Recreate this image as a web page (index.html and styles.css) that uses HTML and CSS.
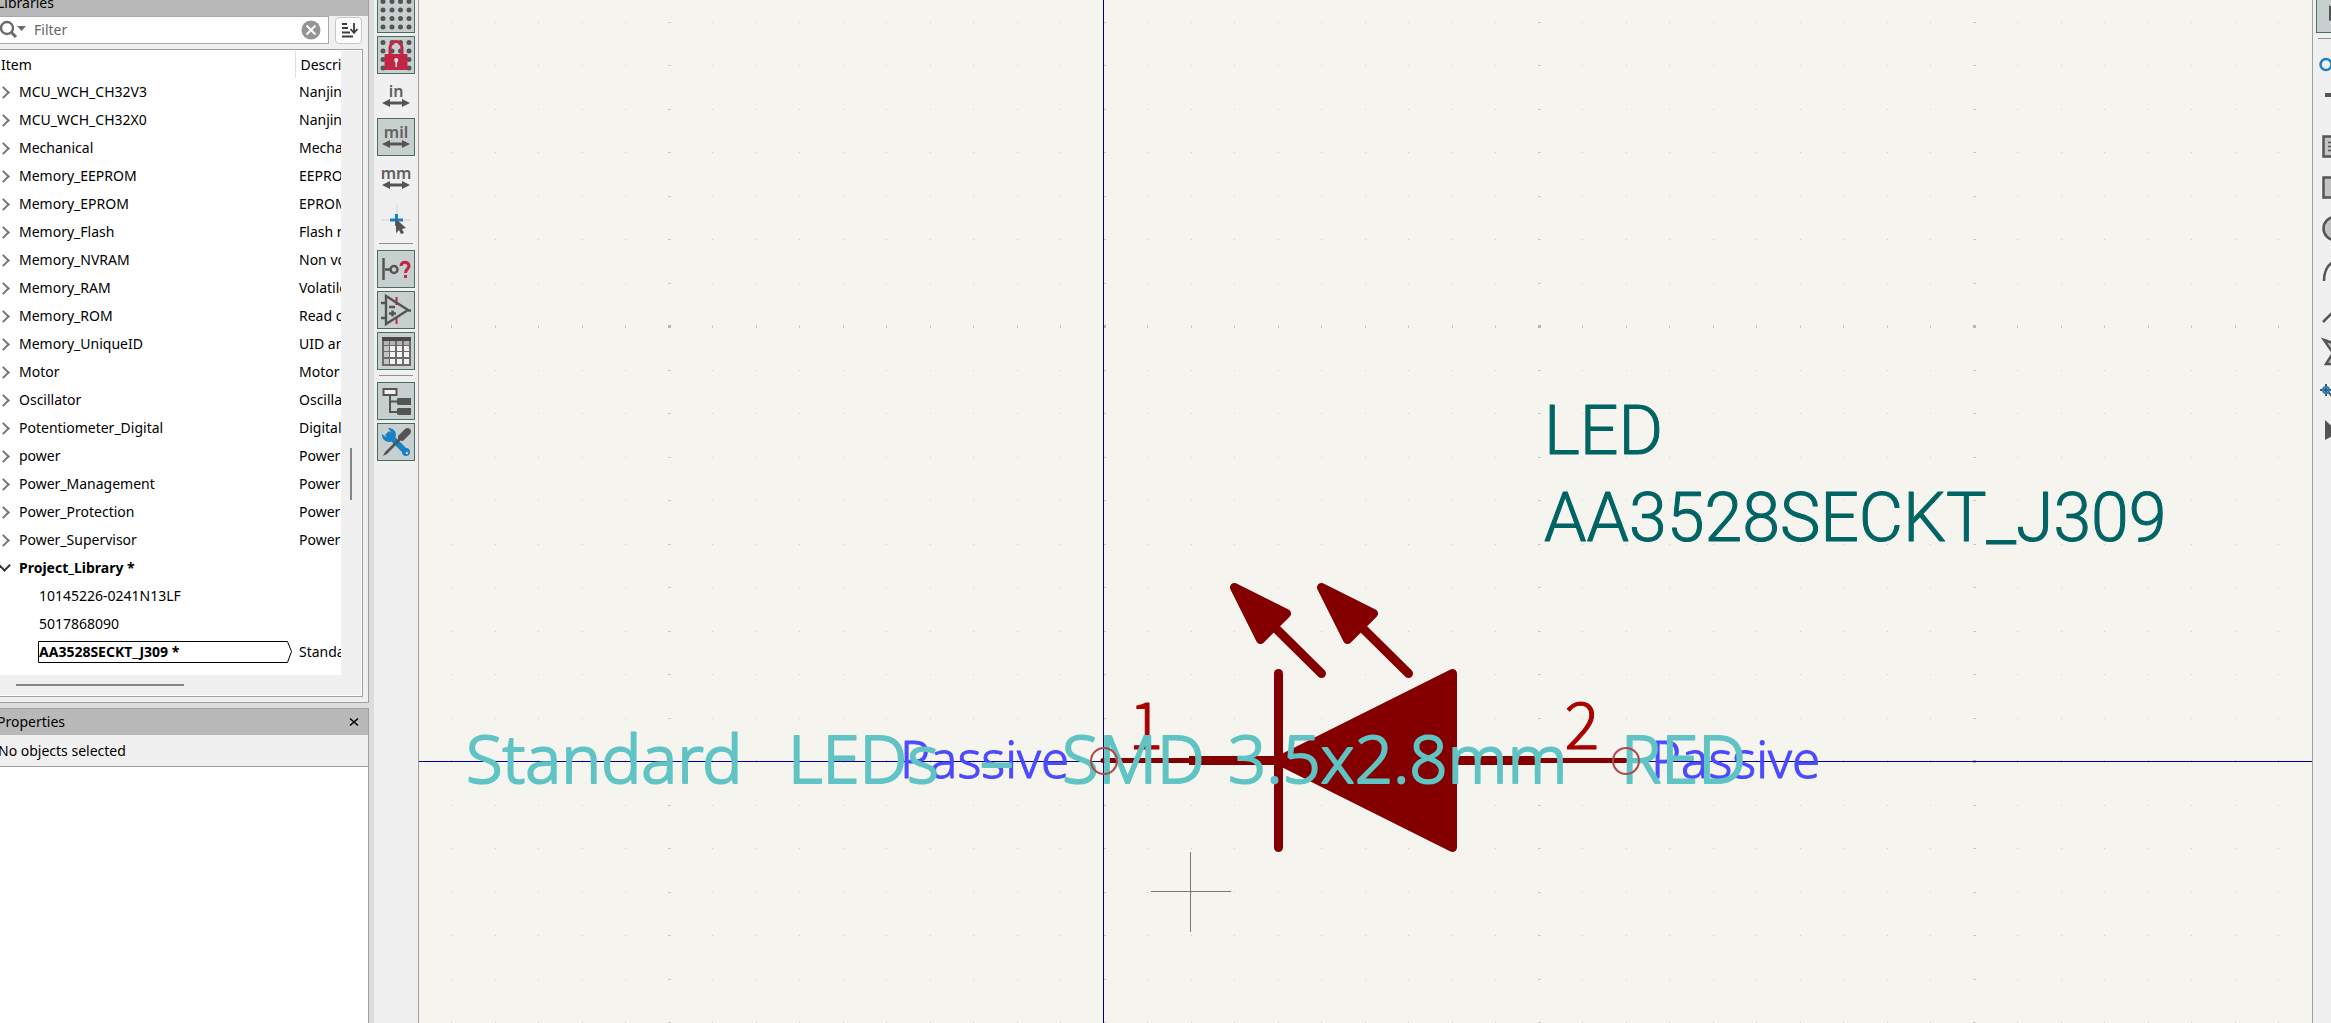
FILE: index.html
```html
<!DOCTYPE html>
<html lang="en">
<head>
<meta charset="utf-8">
<title>Symbol Editor</title>
<link rel="stylesheet" href="styles.css">
</head>
<body>
<aside class="sidebar">
  <section class="panel libraries">
    <h2 class="panel-title">Libraries</h2>
    <div class="search-row">
      <div class="search">
        <svg class="search-icon" width="28" height="20" viewBox="0 0 28 20" aria-hidden="true"><circle cx="7" cy="8" r="6" fill="none" stroke="#6a6a6a" stroke-width="2.400"/><path d="M11 12l5 5" stroke="#6a6a6a" stroke-width="3"/><path d="M17 6h9l-4.500 5z" fill="#6a6a6a"/></svg>
        <input class="search-input" type="text" placeholder="Filter" aria-label="Filter libraries">
        <button class="clear" type="button" aria-label="Clear filter"><svg width="20" height="20" viewBox="0 0 20 20"><circle cx="10" cy="10" r="9.500" fill="#949494"/><path d="M5.500 5.500l9 9M14.500 5.500l-9 9" stroke="#fff" stroke-width="2"/></svg></button>
      </div>
      <button class="sort" type="button" aria-label="Sort"><svg width="20" height="20" viewBox="0 0 20 20" fill="none" stroke="#3c3c3c" stroke-width="1.800"><path d="M3 4h5M3 8h6M3 12.500h8M3 16.500h11M15 3v9M11.500 9l3.500 4 3.500-4"/></svg></button>
    </div>
    <div class="tree">
      <div class="tree-body">
        <table class="tree-table">
          <thead><tr><th>Item</th><th>Description</th></tr></thead>
          <tbody>
            <tr><td class="lib">MCU_WCH_CH32V3</td><td>Nanjing</td></tr>
            <tr><td class="lib">MCU_WCH_CH32X0</td><td>Nanjing</td></tr>
            <tr><td class="lib">Mechanical</td><td>Mechanical</td></tr>
            <tr><td class="lib">Memory_EEPROM</td><td>EEPROM</td></tr>
            <tr><td class="lib">Memory_EPROM</td><td>EPROM</td></tr>
            <tr><td class="lib">Memory_Flash</td><td>Flash memory</td></tr>
            <tr><td class="lib">Memory_NVRAM</td><td>Non volatile</td></tr>
            <tr><td class="lib">Memory_RAM</td><td>Volatile</td></tr>
            <tr><td class="lib">Memory_ROM</td><td>Read only</td></tr>
            <tr><td class="lib">Memory_UniqueID</td><td>UID and</td></tr>
            <tr><td class="lib">Motor</td><td>Motor</td></tr>
            <tr><td class="lib">Oscillator</td><td>Oscillators</td></tr>
            <tr><td class="lib">Potentiometer_Digital</td><td>Digital</td></tr>
            <tr><td class="lib">power</td><td>Power</td></tr>
            <tr><td class="lib">Power_Management</td><td>Power</td></tr>
            <tr><td class="lib">Power_Protection</td><td>Power</td></tr>
            <tr><td class="lib">Power_Supervisor</td><td>Power</td></tr>
            <tr><td class="lib open">Project_Library *</td><td></td></tr>
            <tr><td class="part">10145226-0241N13LF</td><td></td></tr>
            <tr><td class="part">5017868090</td><td></td></tr>
            <tr><td class="part current"><svg class="tag" width="255" height="24" viewBox="0 0 255 24" aria-hidden="true"><path d="M.5 1.500h249l4 10-4 11H.5z" fill="none" stroke="#000"/></svg>AA3528SECKT_J309 *</td><td>Standard</td></tr>
          </tbody>
        </table>
        <div class="vscroll"><div class="vthumb"></div></div>
      </div>
      <div class="hscroll"><div class="hthumb"></div></div>
    </div>
  </section>
  <section class="panel properties">
    <h2 class="panel-title">Properties<button class="close" type="button" aria-label="Close"><svg width="10" height="10" viewBox="0 0 10 10"><path d="M1 1.500l8 7M9 1.500l-8 7" stroke="#000" stroke-width="1.500"/></svg></button></h2>
    <p class="status">No objects selected</p>
    <div class="property-grid"></div>
  </section>
</aside>

<nav class="toolbar" aria-label="View">
  <button class="tool on" type="button" aria-label="Grid"><svg viewBox="0 0 38 38"><path class="dots" d="M6 6.500h0M15 6.500h0M23.500 6.500h0M32 6.500h0M6 15h0M15 15h0M23.500 15h0M32 15h0M6 23.500h0M15 23.500h0M23.500 23.500h0M32 23.500h0M6 32h0M15 32h0M23.500 32h0M32 32h0"/></svg></button>
  <button class="tool on" type="button" aria-label="Grid overrides"><svg viewBox="0 0 38 38"><path class="dots" d="M6 6.500h0M15 6.500h0M23.500 6.500h0M32 6.500h0M6 15h0M15 15h0M23.500 15h0M32 15h0M6 23.500h0M32 23.500h0M6 32h0M32 32h0"/><path d="M13 19v-7a6 6.500 0 0 1 12 0v7" fill="none" stroke="#c22443" stroke-width="3"/><rect x="7.500" y="18" width="23" height="16" rx="1" fill="#c22443"/><path d="M17.500 25a2 2 0 1 1 3.500 0l-1 2v4h-1.500v-4z" fill="#e8e8e8"/></svg></button>
  <button class="tool" type="button"><svg viewBox="0 0 38 38"><text class="unit" x="19" y="20">in</text><path class="arrow" d="M5 26l8-4v2.500h12V22l8 4-8 4v-2.500H13V30z"/></svg></button>
  <button class="tool on" type="button"><svg viewBox="0 0 38 38"><text class="unit" x="19" y="20">mil</text><path class="arrow" d="M5 26l8-4v2.500h12V22l8 4-8 4v-2.500H13V30z"/></svg></button>
  <button class="tool" type="button"><svg viewBox="0 0 38 38"><text class="unit" x="19" y="20">mm</text><path class="arrow" d="M5 26l8-4v2.500h12V22l8 4-8 4v-2.500H13V30z"/></svg></button>
  <button class="tool" type="button" aria-label="Crosshair"><svg viewBox="0 0 38 38"><path d="M4 20h30M20 4v30" stroke="#d4d4d4"/><path d="M13 20h13M19.500 14v12" stroke="#1a81c4" stroke-width="3"/><path d="M19 19l10 9-4 1 2 4-3 1-2-4-3 3z" fill="#545454"/></svg></button>
  <hr class="divider">
  <button class="tool on" type="button" aria-label="Pin electrical type"><svg viewBox="0 0 38 38"><path d="M6.500 8v22M8 19.500h5" stroke="#545454" stroke-width="2.500"/><circle cx="17" cy="19.500" r="3.500" fill="none" stroke="#545454" stroke-width="2.500"/><path d="M24 16c0-5 8-5 8 0 0 3-3.500 3-3.500 7M28.500 25v3" fill="none" stroke="#c22443" stroke-width="3"/></svg></button>
  <button class="tool on" type="button" aria-label="Hidden pins"><svg viewBox="0 0 38 38"><path d="M19.500 6v8M19.500 26v7" stroke="#c22443" stroke-width="2"/><path d="M9 5v28l22-14zM4 12h5M4 27h5M31 19.500h3M12 16h6M12 22.500h7M15.500 19.500v6" fill="none" stroke="#545454" stroke-width="2.400"/></svg></button>
  <button class="tool on" type="button" aria-label="Pin table"><svg viewBox="0 0 38 38"><path d="M5 5h29v29H5z" fill="#6a6a6a"/><path d="M5 5h29v4H5z" fill="#484848"/><path d="M7 9h5v4H7zM13 9h5v4h-5zM20 9h5v4h-5zM27 9h5v4h-5z" fill="#b4b4b4"/><path d="M7 14h5v5H7zM7 20h5v5H7zM7 27h5v5H7z" fill="#c4c4c4"/><path d="M13 14h5v5h-5zM20 14h5v5h-5zM27 14h5v5h-5zM13 20h5v5h-5zM20 20h5v5h-5zM27 20h5v5h-5zM13 27h5v5h-5zM20 27h5v5h-5zM27 27h5v5h-5z" fill="#f2f2f2"/></svg></button>
  <hr class="divider">
  <button class="tool on" type="button" aria-label="Library tree"><svg viewBox="0 0 38 38"><path d="M13 14v16h8M13 19.500h8" fill="none" stroke="#545454" stroke-width="2"/><rect x="6.500" y="7" width="13" height="6" fill="#f2f2f2" stroke="#545454" stroke-width="2"/><path d="M20 17l1-1h13v7H21l-1-1zM20 27l1-1h13v7H21l-1-1z" fill="#545454"/></svg></button>
  <button class="tool on" type="button" aria-label="Properties"><svg viewBox="0 0 38 38"><path d="M10 10l19 19" stroke="#1a81c4" stroke-width="6"/><circle cx="29" cy="29" r="4" fill="#1a81c4"/><circle cx="30" cy="30" r="1.200" fill="#c8d0cf"/><path d="M11 5a7 7 0 1 1-6 6l4 3 4-1 1-4z" fill="#1a81c4"/><path d="M6 33l2-4 14-14 2 2L10 31z" fill="#545454"/><path d="M21 13l7-7q3-2 5 0t0 5l-7 7-5-1z" fill="#545454"/></svg></button>
</nav>

<main class="canvas">
  <svg class="sheet" role="img" aria-label="LED symbol">
    <defs>
      <pattern id="minor" width="87" height="87" patternUnits="userSpaceOnUse"><path d="M1 0h1v1H1zM44 0h1v1h-1zM1 44h1v1H1zM44 44h1v1h-1z" fill="#d2d1cd"/></pattern>
      <pattern id="major" y="-1" width="435" height="435" patternUnits="userSpaceOnUse">
        <path d="M0 45h3v1H0zM0 88h3v1H0zM0 132h3v1H0zM0 175h3v1H0zM0 219h3v1H0zM0 262h3v1H0zM0 306h3v1H0zM0 349h3v1H0zM0 393h3v1H0zM44 0h1v3h-1zM88 0h1v3h-1zM131 0h1v3h-1zM175 0h1v3h-1zM218 0h1v3h-1zM262 0h1v3h-1zM305 0h1v3h-1zM349 0h1v3h-1zM392 0h1v3h-1z" fill="#c8c7c3"/>
        <path d="M0 0h3v3H0z" fill="#b5b5b1"/>
      </pattern>
    </defs>
    <g transform="translate(684 761)">
      <rect x="-4000" y="-4000" width="8000" height="8000" fill="url(#minor)"/>
      <rect x="-4000" y="-4000" width="8000" height="8000" fill="url(#major)"/>
      <path d="M-4000 .5h8000M.5-4000v8000" stroke="#000084"/>
      <g fill="none" stroke="#840000" stroke-linecap="round" stroke-linejoin="round">
        <path d="M0-.5h86M437-.5h85" stroke-width="5"/>
        <path d="M86-.5h90M349-.5h88" stroke-width="9" stroke-linecap="butt"/>
        <path d="M175.500-87.500v174" stroke-width="9"/>
        <path d="M175.500-.5l174-87v174zM131.500-173.500l52 26-26 26zM131.500-173.500l87 86M218.500-173.500l52 26-26 26zM218.500-173.500l87 86" fill="#840000" stroke-width="9"/>
      </g>
      <text class="lettering pin-number" x="43" y="-12">1</text>
      <text class="lettering pin-number" x="479" y="-12">2</text>
      <text class="lettering pin-type" x="-203" y="17">Passive</text>
      <text class="lettering pin-type" x="548" y="17">Passive</text>
      <text class="lettering value" x="441" y="-307">LED</text>
      <text class="lettering value" x="441" y="-220">AA3528SECKT_J309</text>
      <text class="lettering description" y="22"><tspan x="-637">Standard </tspan><tspan x="-315">LEDs </tspan><tspan x="-123">– </tspan><tspan x="-41">SMD </tspan><tspan x="125">3.5x2.8mm </tspan><tspan x="518">RED</tspan></text>
      <g fill="none" stroke="#b04a4a" stroke-width="2"><circle cx="1" r="13"/><circle cx="523" r="13"/></g>
      <path d="M48 130.500h80M87.500 91v80" stroke="#777773"/>
    </g>
  </svg>
</main>

<nav class="toolbar right" aria-label="Draw">
  <button class="tool on" type="button" aria-label="Select"><svg viewBox="0 0 38 38"><path d="M13 10l14 10-14 6z" fill="#545454"/></svg></button>
  <hr class="divider">
  <button class="tool" type="button" aria-label="Pin"><svg viewBox="0 0 38 38"><circle cx="10" cy="19.500" r="5.500" fill="none" stroke="#1a81c4" stroke-width="2.500"/><path d="M16 19.500h18" stroke="#1a81c4" stroke-width="2.500"/></svg></button>
  <button class="tool" type="button" aria-label="Text"><svg viewBox="0 0 38 38"><path d="M9 9h20M19 9v22" stroke="#545454" stroke-width="4"/></svg></button>
  <button class="tool" type="button" aria-label="Text box"><svg viewBox="0 0 38 38"><rect x="7.500" y="9.500" width="23" height="20" fill="#c4c4c4" stroke="#545454" stroke-width="2.500"/><path d="M12 15.500h14M12 19.500h14M12 23.500h14" stroke="#545454" stroke-width="1.500"/></svg></button>
  <button class="tool" type="button" aria-label="Rectangle"><svg viewBox="0 0 38 38"><rect x="7.500" y="9.500" width="23" height="20" fill="#c4c4c4" stroke="#545454" stroke-width="2.500"/></svg></button>
  <button class="tool" type="button" aria-label="Circle"><svg viewBox="0 0 38 38"><circle cx="19" cy="19.500" r="11.500" fill="#c4c4c4" stroke="#545454" stroke-width="2.500"/></svg></button>
  <button class="tool" type="button" aria-label="Arc"><svg viewBox="0 0 38 38"><path d="M8 31Q8 11 27 9" fill="none" stroke="#545454" stroke-width="2.500"/></svg></button>
  <button class="tool" type="button" aria-label="Line"><svg viewBox="0 0 38 38"><path d="M7 31L30 8" stroke="#545454" stroke-width="2.500"/></svg></button>
  <button class="tool" type="button" aria-label="Polygon"><svg viewBox="0 0 38 38"><path d="M8 8l23 8v16H10l7-11z" fill="#c4c4c4" stroke="#545454" stroke-width="2.500"/></svg></button>
  <button class="tool" type="button" aria-label="Anchor"><svg viewBox="0 0 38 38"><path d="M4 17h12M10 11v12M12 19l8 8" stroke="#545454" stroke-width="2"/><circle cx="10" cy="17" r="3" fill="none" stroke="#1a81c4" stroke-width="2"/></svg></button>
  <button class="tool" type="button" aria-label="Delete"><svg viewBox="0 0 38 38"><path d="M9 6l15 14-6 1-9 5z" fill="#545454"/></svg></button>
</nav>
</body>
</html>
```
FILE: styles.css
```css
* { box-sizing: border-box; }

body {
  margin: 0;
  display: flex;
  height: 100vh;
  overflow: hidden;
  background: #dcdcdc;
  color: #000;
  font: 14px/20px "Noto Sans", "Open Sans", sans-serif;
}

button { padding: 0; border: 0; background: none; color: inherit; font: inherit; }
svg { display: block; }

.sidebar {
  flex: none;
  width: 369px;
  display: flex;
  flex-direction: column;
  gap: 5px;
  margin-right: 5px;
}

.panel { background: #f0f0f0; border-right: 1px solid #a0a0a0; }
.libraries { border-bottom: 1px solid #a0a0a0; }

.panel-title {
  display: flex;
  justify-content: space-between;
  align-items: center;
  height: 26px;
  margin: 0;
  padding-right: 9px;
  background: #b9b9b9;
  font-size: 14px;
  font-weight: 400;
  text-indent: -3px;
}
.libraries .panel-title { margin-top: -10px; }

.search-row { display: flex; align-items: center; padding-right: 6px; gap: 6px; }
.search {
  flex: 1;
  display: flex;
  align-items: center;
  height: 28px;
  padding-right: 7px;
  background: #fff;
  border: 1px solid #a8a8a8;
  border-left: 0;
}
.search-input { flex: 1; min-width: 0; border: 0; outline: 0; padding: 0 6px; font: inherit; background: none; }
.search-input::placeholder { color: #666; opacity: 1; }
.sort {
  display: flex;
  align-items: center;
  justify-content: center;
  width: 27px;
  height: 27px;
  border: 1px solid #c8c8c8;
  border-radius: 4px;
  background: #fdfdfd;
}

.tree {
  margin: 5px 5px 5px 0;
  padding: 1px 1px 1px 0;
  border: 1px solid #a0a0a0;
  border-left: 0;
  background: #fff;
}
.tree-body { display: flex; }
.tree-table {
  flex: 1;
  min-width: 0;
  table-layout: fixed;
  width: 341px;
  margin-bottom: 9px;
  border-collapse: collapse;
  white-space: nowrap;
}
.tree-table th, .tree-table td { padding: 0; height: 28px; overflow: hidden; text-align: left; font-weight: 400; }
.tree-table th { height: 27px; padding-left: 5px; }
.tree-table th:first-child { width: 295px; padding-left: 1px; border-right: 1px solid #e0e0e0; }
.tree-table td:last-child { padding-left: 4px; }
.tree-table .lib { position: relative; padding-left: 19px; }
.tree-table .part { position: relative; padding-left: 39px; }
.tree-table .open, .tree-table .current { font-weight: 700; }
.lib::before {
  content: "";
  position: absolute;
  left: -1px;
  top: 10px;
  width: 7px;
  height: 7px;
  border: solid #777;
  border-width: 2px 2px 0 0;
  transform: rotate(45deg);
}
.lib.open::before { top: 7px; left: 0; border-color: #333; transform: rotate(135deg); }
.tag { position: absolute; left: 38px; top: 2px; }

.vscroll { flex: none; width: 20px; background: #f0f0f0; }
.vthumb { width: 2px; height: 52px; margin: 397px 0 0 9px; background: #858585; }
.hscroll { height: 20px; padding: 9px 0 0 16px; background: #f0f0f0; }
.hthumb { width: 168px; height: 2px; background: #858585; }

.properties { flex: 1; display: flex; flex-direction: column; border-top: 1px solid #a0a0a0; }
.status { margin: 0; padding: 6px 0 5px; text-indent: -2px; border-bottom: 1px solid #a0a0a0; }
.property-grid { flex: 1; background: #fff; }

.toolbar {
  flex: none;
  display: flex;
  flex-direction: column;
  gap: 3px;
  width: 45px;
  padding: 0 3px;
  margin-top: -5px;
  background: #f0f0f0;
  border-right: 1px solid #a0a0a0;
}
.toolbar.right { width: 19px; overflow: hidden; border: 0; border-left: 1px solid #a0a0a0; }
.tool { flex: none; width: 38px; height: 38px; }
.tool.on { background: #c8d0cf; outline: 1px solid #487060; outline-offset: -1px; }
.tool svg { width: 38px; height: 38px; }
.divider { flex: none; width: 34px; height: 1px; margin: 2px 0 3px 2px; border: 0; background: #909090; }

.dots { stroke: #545454; stroke-width: 5; stroke-linecap: round; }
.unit { font: 600 16px "Noto Sans", sans-serif; text-anchor: middle; fill: #606060; }
.arrow { fill: #545454; }

.canvas { flex: 1; min-width: 0; background: #f5f4ef; }
.sheet { width: 100%; height: 100%; }

/* Light faces with a thin round outline give the even pen stroke of plotted lettering */
.lettering { fill: currentColor; stroke: currentColor; stroke-width: 1px; stroke-linejoin: round; }
.value { color: #006464; font: 300 68px Roboto, sans-serif; }
.description { color: #60c3c4; font: 300 67px "Noto Sans", sans-serif; stroke-width: 2px; }
.pin-type { color: #4a4aff; font: 300 51px "Noto Sans", sans-serif; }
.pin-number { color: #a90000; font: 300 65px "Noto Sans CJK SC", sans-serif; text-anchor: middle; }
```
